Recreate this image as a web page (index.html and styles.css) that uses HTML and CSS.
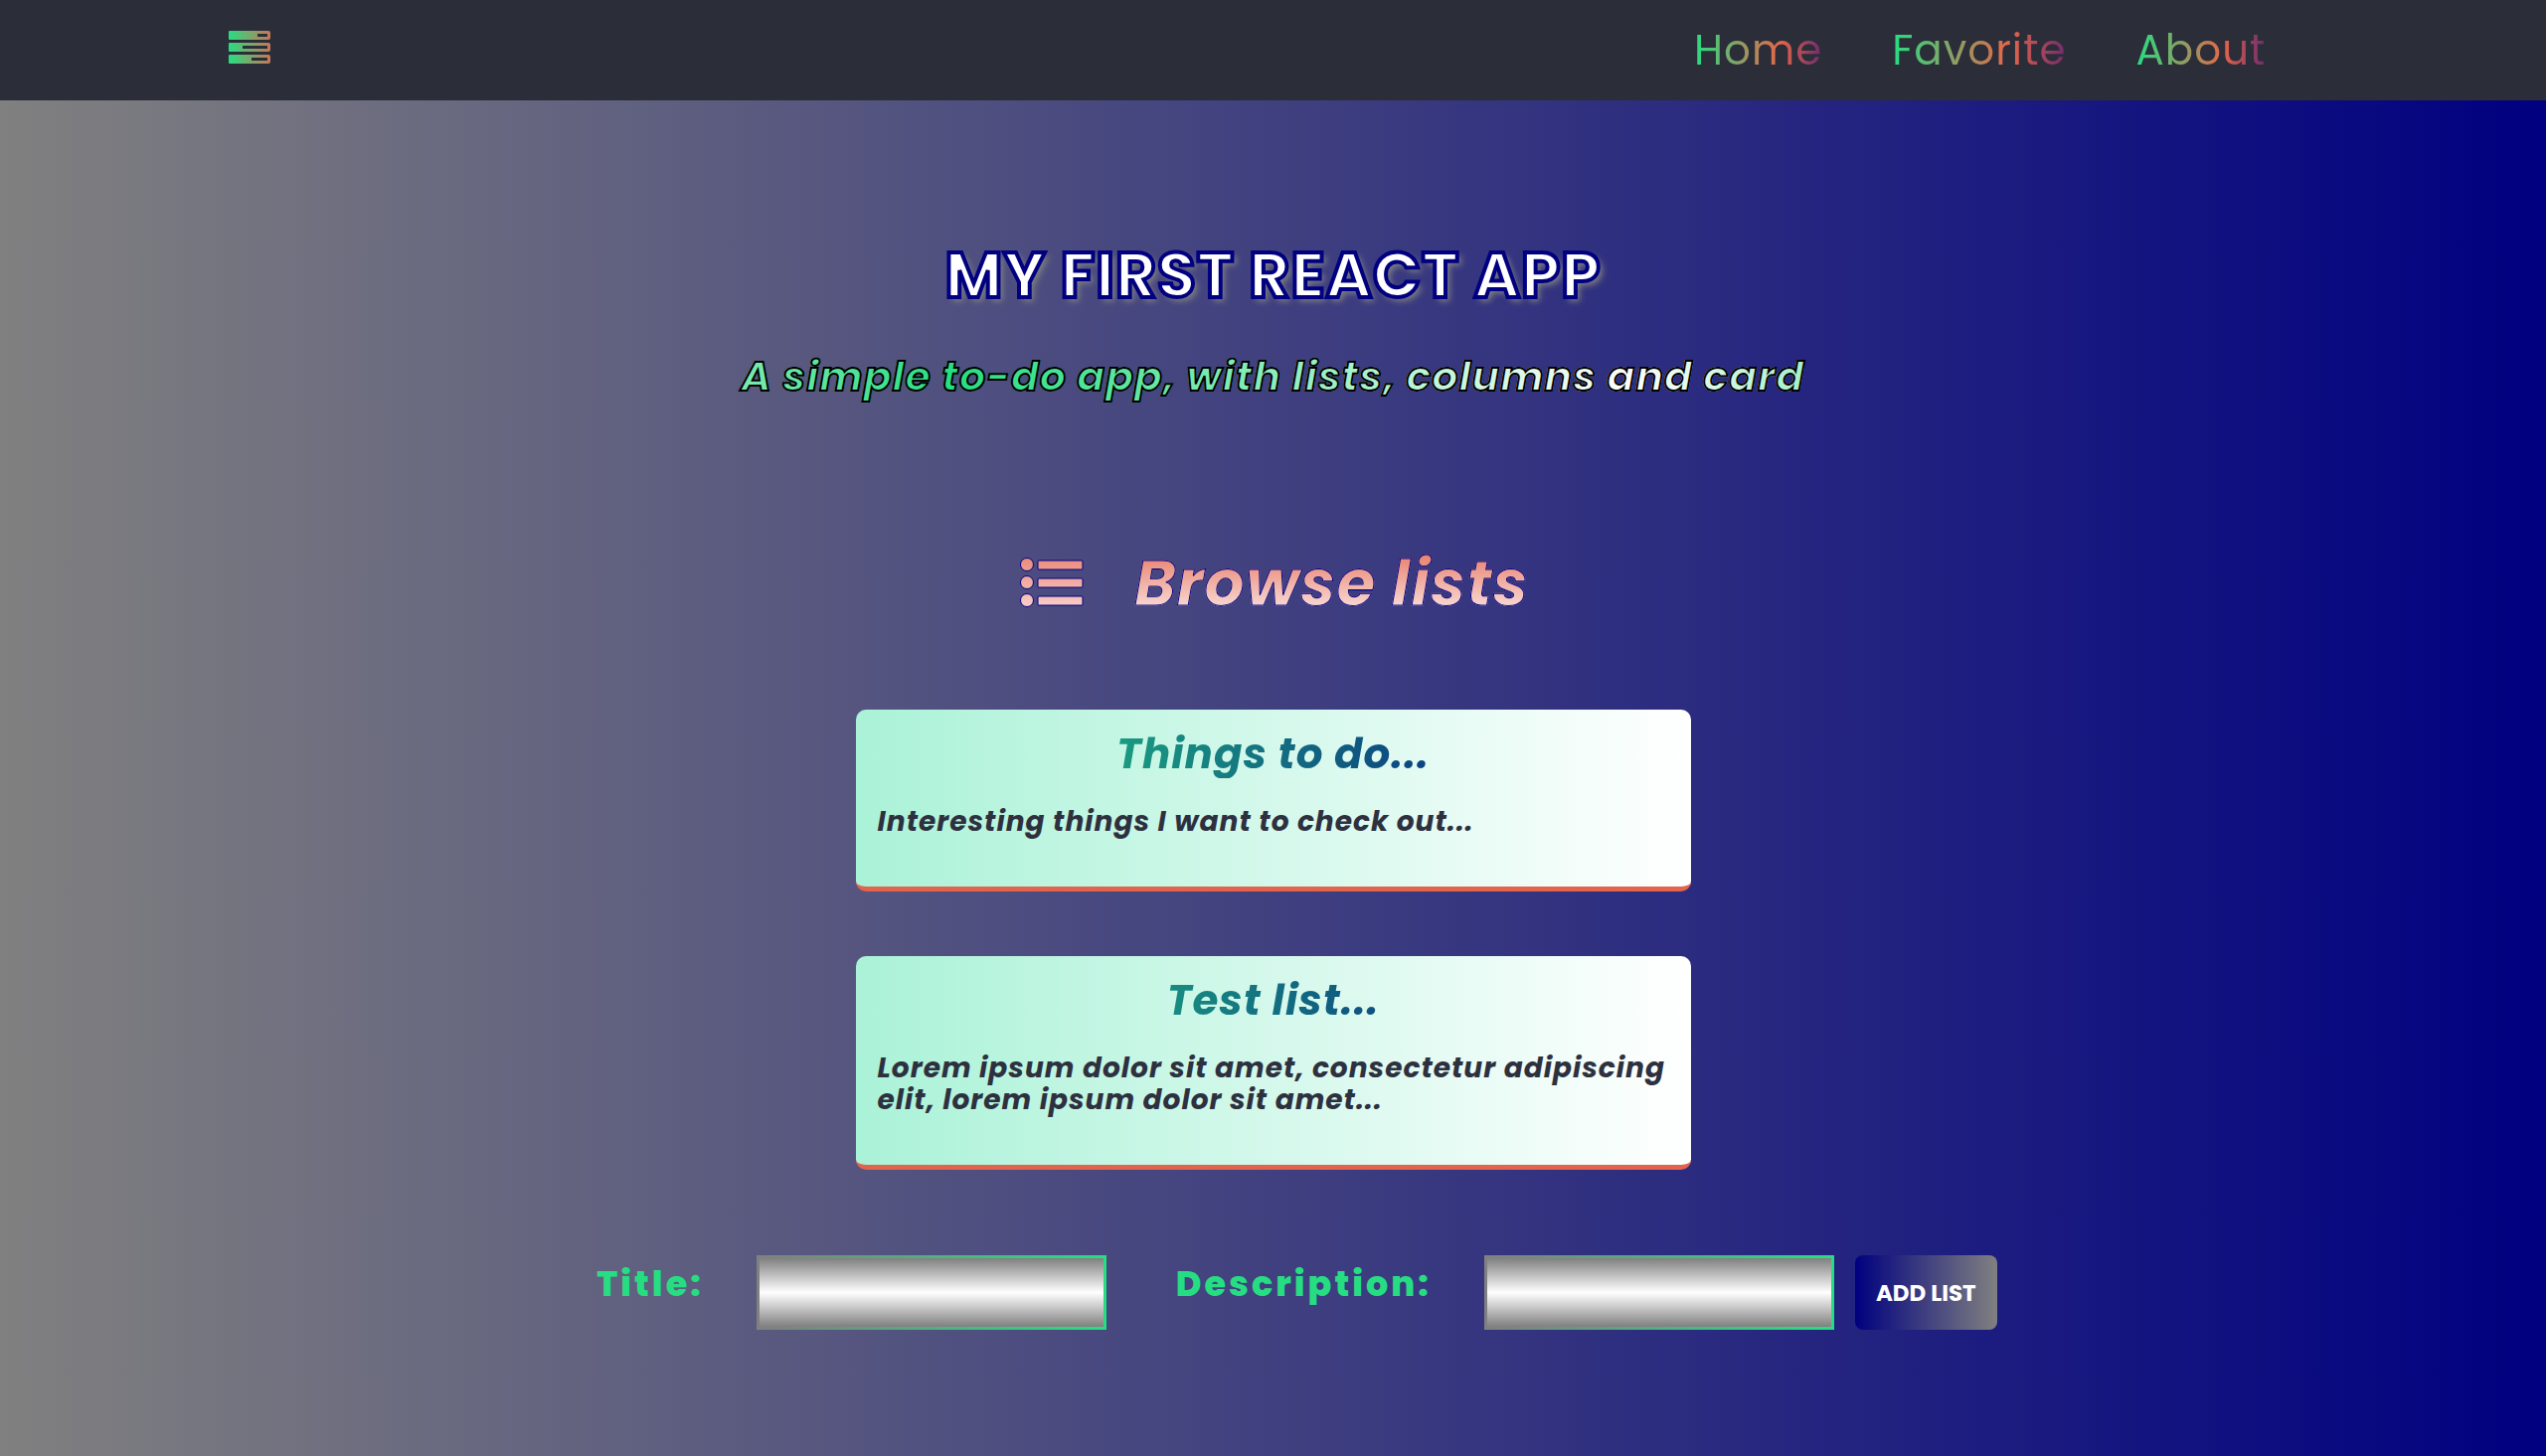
FILE: index.html
```html
<!DOCTYPE html>
<html lang="en">
<head>
<meta charset="utf-8">
<meta name="viewport" content="width=device-width, initial-scale=1">
<title>My first React app</title>
<link rel="stylesheet" href="styles.css">
</head>
<body>
<header class="navbar">
  <a class="brand" href="#" aria-label="Home page">
    <svg class="brand-icon" viewBox="0 0 42 34" aria-hidden="true">
      <defs>
        <linearGradient id="brand-fill" gradientUnits="userSpaceOnUse" x1="0" y1="0" x2="42" y2="0">
          <stop offset="0" stop-color="#26de81"/>
          <stop offset="1" stop-color="#c97556"/>
        </linearGradient>
      </defs>
      <path fill="url(#brand-fill)" fill-rule="evenodd" d="M1 0h39q2 0 2 2v5q0 2-2 2H1q-1 0-1-1V1q0-1 1-1zM29 3v3h10V3zM1 12h39q2 0 2 2v5q0 2-2 2H1q-1 0-1-1v-7q0-1 1-1zM14 15v3h25v-3zM1 24h39q2 0 2 2v5q0 2-2 2H1q-1 0-1-1v-7q0-1 1-1zM23 27v3h16v-3z"/>
    </svg>
  </a>
  <nav class="links">
    <a href="#">Home</a>
    <a href="#">Favorite</a>
    <a href="#">About</a>
  </nav>
</header>
<main class="page">
  <section class="hero">
    <h1 class="title">MY FIRST REACT APP</h1>
    <h2 class="subtitle">A simple to-do app, with lists, columns and card</h2>
  </section>
  <section class="lists">
    <h2 class="lists-heading">
      <svg class="lists-icon" viewBox="0 0 66 56" aria-hidden="true">
        <defs>
          <linearGradient id="list-fill" gradientUnits="userSpaceOnUse" x1="0" y1="0" x2="0" y2="56">
            <stop offset="0" stop-color="#ea8878"/>
            <stop offset="1" stop-color="#fbd3cf"/>
          </linearGradient>
        </defs>
        <g fill="url(#list-fill)" stroke="navy" stroke-width="1">
          <circle cx="8" cy="9" r="6.500"/>
          <circle cx="8" cy="27" r="6.500"/>
          <circle cx="8" cy="45" r="6.500"/>
          <rect x="19" y="5" width="45" height="9" rx="1"/>
          <rect x="19" y="23" width="45" height="9" rx="1"/>
          <rect x="19" y="41" width="45" height="9" rx="1"/>
        </g>
      </svg>
      <span class="lists-text">Browse lists</span>
    </h2>
    <div class="cards">
      <article class="card">
        <h3 class="card-title">Things to do...</h3>
        <p class="card-text">Interesting things I want to check out...</p>
      </article>
      <article class="card">
        <h3 class="card-title">Test list...</h3>
        <p class="card-text">Lorem ipsum dolor sit amet, consectetur adipiscing elit, lorem ipsum dolor sit amet...</p>
      </article>
    </div>
  </section>
  <form class="list-form">
    <label class="label" for="title">Title:</label>
    <input class="field" id="title" type="text">
    <label class="label label-next" for="description">Description:</label>
    <input class="field" id="description" type="text">
    <button class="add" type="button">ADD LIST</button>
  </form>
</main>
</body>
</html>
```
FILE: styles.css
```css
* {
  box-sizing: border-box;
  margin: 0;
  padding: 0;
}

body {
  min-height: 100vh;
  font-family: Poppins, Inter, sans-serif;
  background: linear-gradient(to right, grey, navy);
}

.navbar {
  display: flex;
  align-items: center;
  justify-content: space-between;
  height: 101px;
  padding: 0 11% 0 9%;
  background: #2b2e39;
}

.brand {
  display: flex;
  padding-bottom: 5px;
}

.brand-icon {
  width: 42px;
  height: 34px;
}

.links {
  display: flex;
  gap: 70px;
}

.links a {
  font-size: 42px;
  font-weight: 400;
  letter-spacing: 1px;
  text-decoration: none;
  color: transparent;
  background: linear-gradient(to right, #26de81, #e66649 67%, #6f2a6e);
  background-clip: text;
}

.page {
  display: flex;
  flex-direction: column;
  align-items: center;
  padding: 128px 20px;
}

.hero {
  text-align: center;
}

.title {
  font-size: 63px;
  font-weight: 700;
  line-height: 96px;
  letter-spacing: 1px;
  color: #fff;
  -webkit-text-stroke: 4px navy;
  text-shadow: 4px 4px 6px grey;
}

.subtitle {
  margin-top: 24px;
  font-size: 41px;
  font-style: italic;
  font-weight: 700;
  line-height: 60px;
  letter-spacing: 1px;
  color: transparent;
  background: linear-gradient(to right, #7beab1, #26de81 20%, #fff 84%, #a6f0ca);
  background-clip: text;
  -webkit-text-stroke: 2px #000;
}

.lists {
  display: flex;
  flex-direction: column;
  align-items: center;
  margin-top: 130px;
}

.lists-heading {
  display: flex;
  align-items: center;
  gap: 50px;
  padding-left: 2px;
  font-size: 63px;
  line-height: 96px;
}

.lists-icon {
  width: 66px;
  height: 56px;
}

.lists-text {
  font-style: italic;
  font-weight: 700;
  letter-spacing: 1px;
  color: transparent;
  background: linear-gradient(#e2644c, #fff);
  background-clip: text;
  -webkit-text-stroke: 1px navy;
}

.cards {
  display: grid;
  gap: 65px;
  margin-top: 79px;
}

.card {
  width: 840px;
  max-width: 100%;
  padding: 21px 22px 49px;
  border-bottom: 5px solid #e2644c;
  border-radius: 10px;
  background: linear-gradient(to right, #aaf2d8, #fff);
}

.card-title {
  font-size: 42px;
  font-style: italic;
  font-weight: 700;
  line-height: 48px;
  letter-spacing: 1px;
  text-align: center;
  color: transparent;
  background: linear-gradient(to right, #26de81, navy);
  background-clip: text;
}

.card-text {
  margin-top: 28px;
  font-size: 28px;
  font-style: italic;
  font-weight: 700;
  line-height: 32px;
  letter-spacing: 1px;
  color: #2d313f;
}

.list-form {
  display: flex;
  margin-top: 86px;
  padding-left: 48px;
}

.label {
  margin-right: 53px;
  font-size: 35px;
  font-weight: 800;
  line-height: 58px;
  letter-spacing: 3px;
  color: #26de81;
}

.label-next {
  margin-left: 70px;
}

.field {
  width: 352px;
  height: 75px;
  padding: 0 16px;
  font-size: 28px;
  border: 3px solid;
  border-image: linear-gradient(to right, grey, #26de81) 1;
  background: linear-gradient(grey, #fff, grey);
}

.add {
  width: 143px;
  margin-left: 21px;
  border: 0;
  border-radius: 8px;
  font-family: inherit;
  font-size: 23px;
  font-weight: 700;
  color: #fff;
  background: linear-gradient(to right, navy, grey);
}
```
